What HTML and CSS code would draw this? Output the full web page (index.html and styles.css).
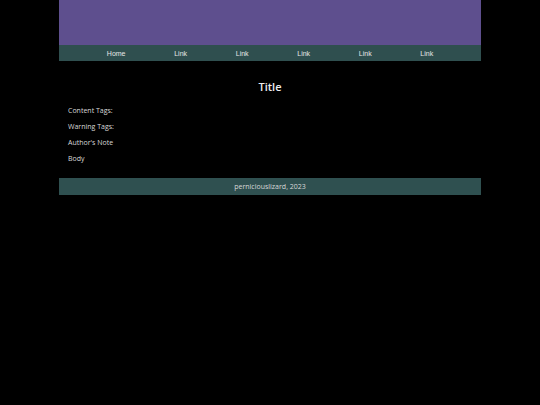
FILE: index.html
```html
<!DOCTYPE html>
<html>
<head>
<meta charset="utf-8">
<link rel="stylesheet" href="styles.css">
</head>
<body>
<div class="page">
  <header class="banner"></header>
  <nav class="nav">
    <a class="nav-link" href="#">Home</a>
    <a class="nav-link" href="#">Link</a>
    <a class="nav-link" href="#">Link</a>
    <a class="nav-link" href="#">Link</a>
    <a class="nav-link" href="#">Link</a>
    <a class="nav-link" href="#">Link</a>
  </nav>
  <main class="content">
    <h1 class="title">Title</h1>
    <p class="line">Content Tags:</p>
    <p class="line">Warning Tags:</p>
    <p class="line">Author's Note</p>
    <p class="line">Body</p>
  </main>
  <footer class="footer">perniciouslizard, 2023</footer>
</div>
</body>
</html>
```
FILE: styles.css
```css
html, body {
  margin: 0;
  padding: 0;
  background: #000;
}
body {
  font-family: "Open Sans", "Liberation Sans", sans-serif;
  color: #ddd;
}
.page {
  width: 422px;
  margin: 0 auto;
}
.banner {
  display: block;
  height: 45px;
  background: #5e4f8e;
}
.nav {
  display: flex;
  justify-content: center;
  gap: 48.7px;
  height: 16px;
  background: #2f4f4f;
}
.nav-link {
  font-family: "Liberation Sans", Arial, sans-serif;
  font-size: 7px;
  line-height: 17px;
  color: #e6e6e6;
  text-decoration: none;
}
.content {
  padding: 18px 9px 11px;
}
.title {
  margin: 0 0 8px;
  text-align: center;
  font-size: 11px;
  font-weight: 600;
  line-height: 16px;
  color: #eee;
}
.line {
  margin: 0;
  font-size: 7px;
  line-height: 16px;
  color: #d8d8d8;
}
.footer {
  height: 17px;
  line-height: 17px;
  background: #2f5050;
  text-align: center;
  font-size: 7px;
  color: #d8d8d8;
}
```
